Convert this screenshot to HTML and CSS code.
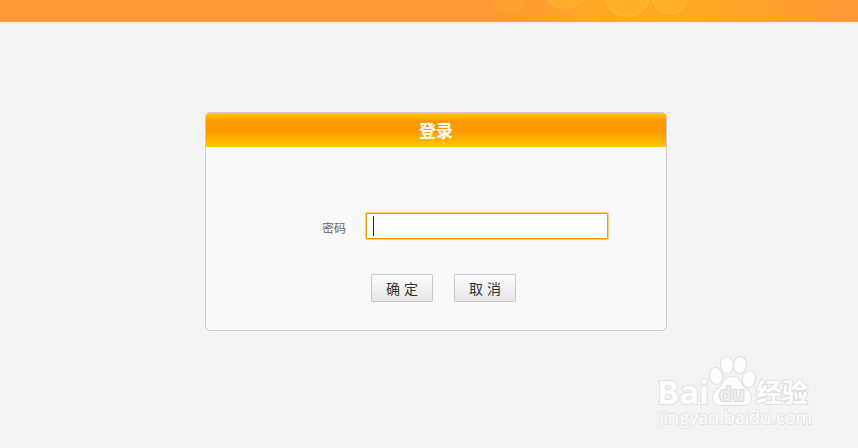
FILE: index.html
```html
<!DOCTYPE html>
<html lang="zh-CN">
<head>
<meta charset="utf-8">
<title>登录</title>
<link rel="stylesheet" href="styles.css">
</head>
<body>
<header class="banner">
  <svg class="bubbles" width="388" height="22" viewBox="470 0 388 22" aria-hidden="true">
    <defs>
      <radialGradient id="bubble">
        <stop offset="0" stop-color="#ffb428" stop-opacity=".7"/>
        <stop offset=".85" stop-color="#ffb428" stop-opacity=".7"/>
        <stop offset="1" stop-color="#ffbc30" stop-opacity=".9"/>
      </radialGradient>
    </defs>
    <g fill="url(#bubble)">
      <circle cx="509" cy="-6" r="18" opacity=".3"/>
      <circle cx="566" cy="-15" r="24" opacity=".6"/>
      <circle cx="586" cy="4" r="18" opacity=".3"/>
      <circle cx="627" cy="-7" r="24"/>
      <circle cx="670" cy="-4" r="18"/>
    </g>
  </svg>
</header>
<main class="stage">
  <form class="card">
    <h1 class="card-title">登录</h1>
    <div class="card-body">
      <div class="field">
        <label class="field-label" for="password">密码</label>
        <input class="field-input" id="password" type="password">
      </div>
      <div class="actions">
        <button class="button" type="submit">确 定</button>
        <button class="button" type="reset">取 消</button>
      </div>
    </div>
  </form>
</main>
<svg class="watermark" width="160" height="76" viewBox="0 0 160 76" role="img" aria-label="Baidu 经验">
  <g class="mark">
    <text class="mark-latin" x="4" y="48">Bai</text>
    <ellipse cx="63" cy="20" rx="6" ry="8" transform="rotate(-10 63 20)"/>
    <ellipse cx="74" cy="9" rx="6" ry="8"/>
    <ellipse cx="87" cy="9" rx="6" ry="8" transform="rotate(8 87 9)"/>
    <ellipse cx="96" cy="23" rx="6" ry="8" transform="rotate(12 96 23)"/>
    <path d="M79 21c-6 0-8 4-10 8-3 4-9 6-9 13 0 5 4 7 9 7h20c6 0 9-2 9-7 0-7-6-9-9-13-2-4-4-8-10-8z"/>
    <text class="mark-du" x="66" y="45">du</text>
    <text class="mark-cjk" x="103" y="46">经验</text>
    <text class="mark-url" x="6" y="68">jingyan.baidu.com</text>
  </g>
</svg>
</body>
</html>
```

FILE: styles.css
```css
* {
  box-sizing: border-box;
}

body {
  margin: 0;
  min-height: 100vh;
  background: #f4f4f4;
  color: #666;
  font: 12px/16px "Liberation Sans", "Noto Sans CJK SC", sans-serif;
}

.banner {
  display: flex;
  justify-content: flex-end;
  height: 22px;
  overflow: hidden;
  background: linear-gradient(90deg, #ff9933 58%, #ffa823 72%, #ffa823 82%, #ff9933 97%);
}

.stage {
  display: flex;
  justify-content: center;
  padding: 90px 0 0 14px;
}

.card {
  width: 462px;
  max-width: 100%;
  overflow: hidden;
  border: 1px solid #ccc;
  border-radius: 5px;
  background: #f9f9f9;
}

.card-title {
  margin: 0;
  padding-top: 4px;
  background: linear-gradient(#ffc800, #ff9900 24%, #ff9900 54%, #ffc800);
  color: #fff;
  font-size: 17px;
  line-height: 30px;
  text-align: center;
}

.card-body {
  padding: 66px 58px 28px;
}

.field {
  display: flex;
  align-items: center;
  justify-content: flex-end;
  gap: 20px;
}

.field-label {
  padding-top: 6px;
}

.field-input {
  width: 242px;
  height: 26px;
  padding: 2px 8px;
  border: 1px solid #f39800;
  border-radius: 1px;
  outline: none;
  box-shadow: 0 0 0 1px #f8cd88;
  background: #fff linear-gradient(#222, #222) 6px center / 1px 20px no-repeat;
  color: #333;
  font-size: 14px;
}

.actions {
  display: flex;
  gap: 21px;
  padding: 35px 0 0 107px;
}

.button {
  width: 62px;
  height: 28px;
  padding: 2px 0 0;
  border: 1px solid #c8c8c8;
  border-radius: 1px;
  background: linear-gradient(#fdfdfd, #e6e6e6);
  color: #333;
  font: 14px/24px "Liberation Sans", "Noto Sans CJK SC", sans-serif;
}

.watermark {
  position: absolute;
  right: 45px;
  bottom: 16px;
}

.mark {
  fill: #fefefe;
  stroke: #dedede;
  stroke-width: 2px;
  stroke-linejoin: round;
  paint-order: stroke;
}

.mark-latin {
  font: bold 33px "Open Sans", sans-serif;
}

.mark-du {
  fill: #efefef;
  stroke: #d6d6d6;
  font: bold 20px "Open Sans", sans-serif;
}

.mark-cjk {
  font: bold 26px "Noto Sans CJK SC", sans-serif;
}

.mark-url {
  stroke: #e4e4e4;
  font: 18px "Open Sans", sans-serif;
}
```
